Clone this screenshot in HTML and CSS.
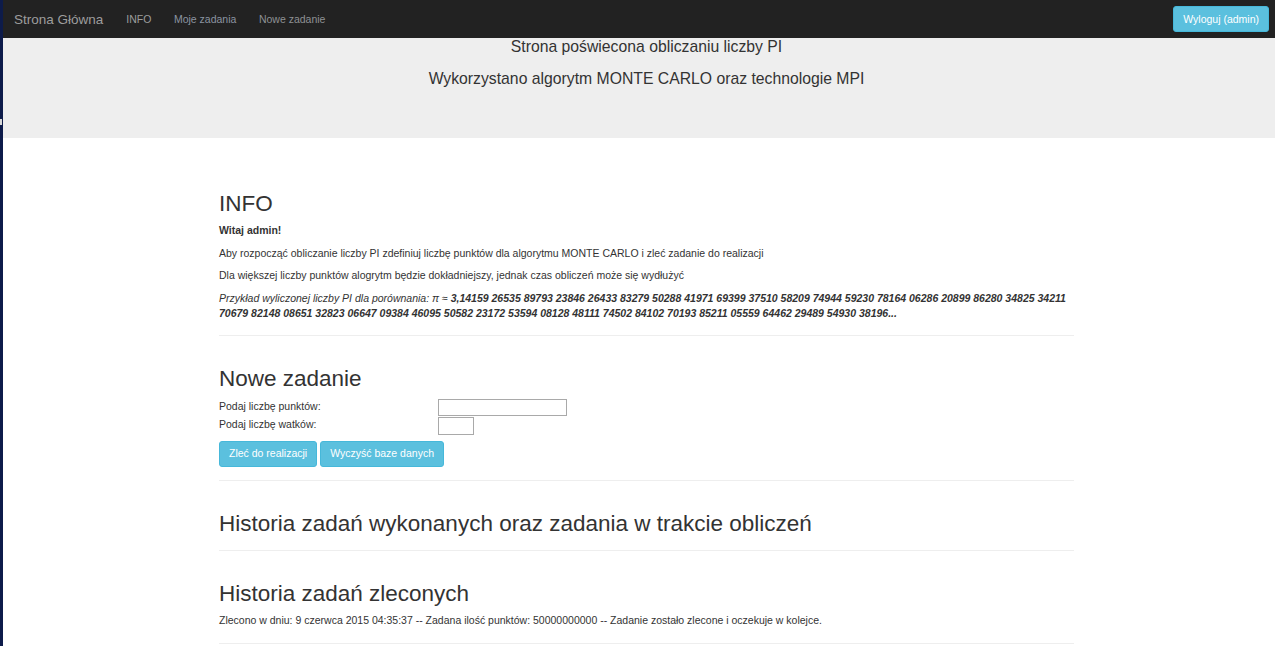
FILE: index.html
```html
<!DOCTYPE html>
<html lang="pl">
<head>
<meta charset="utf-8">
<title>Strona Główna</title>
<link rel="stylesheet" href="styles.css">
</head>
<body>
<div class="page">
  <div class="strip"><span class="strip-mark"></span></div>
  <div class="main">
    <nav class="navbar">
      <div class="nav-left">
        <a class="brand" href="#">Strona Główna</a>
        <a class="nav-link nav-info" href="#">INFO</a>
        <a class="nav-link nav-blue" href="#">Moje zadania</a>
        <a class="nav-link" href="#">Nowe zadanie</a>
      </div>
      <button class="btn btn-logout">Wyloguj (admin)</button>
    </nav>
    <div class="jumbotron">
      <div class="container">
        <p class="jt-line1">Strona poświecona obliczaniu liczby PI</p>
        <p class="jt-line2">Wykorzystano algorytm MONTE CARLO oraz technologie MPI</p>
      </div>
    </div>
    <div class="container content">
      <h2 class="h-info">INFO</h2>
      <p class="bold">Witaj admin!</p>
      <p>Aby rozpocząć obliczanie liczby PI zdefiniuj liczbę punktów dla algorytmu MONTE CARLO i zleć zadanie do realizacji</p>
      <p>Dla większej liczby punktów alogrytm będzie dokładniejszy, jednak czas obliczeń może się wydłużyć</p>
      <p class="pi"><i>Przykład wyliczonej liczby PI dla porównania: π ≈ <b>3,14159 26535 89793 23846 26433 83279 50288 41971 69399 37510 58209 74944 59230 78164 06286 20899 86280 34825 34211 70679 82148 08651 32823 06647 09384 46095 50582 23172 53594 08128 48111 74502 84102 70193 85211 05559 64462 29489 54930 38196...</b></i></p>
      <hr class="hr1">
      <h2 class="h-section">Nowe zadanie</h2>
      <div class="form-grid">
        <label class="lbl">Podaj liczbę punktów:</label>
        <div class="cell"><input class="in-points" type="text"></div>
        <label class="lbl">Podaj liczbę watków:</label>
        <div class="cell"><input class="in-threads" type="text"></div>
      </div>
      <div class="btn-row">
        <button class="btn btn-info">Zleć do realizacji</button>
        <button class="btn btn-info">Wyczyść baze danych</button>
      </div>
      <hr class="hr2">
      <h2 class="h-section">Historia zadań wykonanych oraz zadania w trakcie obliczeń</h2>
      <hr class="hr3">
      <h2 class="h-section">Historia zadań zleconych</h2>
      <p class="task">Zlecono w dniu: 9 czerwca 2015 04:35:37 -- Zadana ilość punktów: 50000000000 -- Zadanie zostało zlecone i oczekuje w kolejce.</p>
      <hr class="hr4">
    </div>
  </div>
</div>
</body>
</html>
```

FILE: styles.css
```css
* { box-sizing: border-box; }
html, body { margin: 0; padding: 0; }
body {
  font-family: "Liberation Sans", Arial, Helvetica, sans-serif;
  font-size: 10.5px;
  line-height: 15px;
  color: #333;
  background: #fff;
}
.page {
  display: flex;
  min-height: 646px;
}
.strip {
  width: 3px;
  flex: 0 0 3px;
  background: #0d1b4a;
  position: relative;
}
.strip-mark {
  position: absolute;
  left: 0;
  top: 119px;
  width: 2px;
  height: 6px;
  background: #d8d8d8;
}
.main {
  flex: 1;
  min-width: 0;
}
.navbar {
  height: 38px;
  background: #222;
  display: flex;
  align-items: center;
  justify-content: space-between;
  padding: 0 6px 0 11px;
}
.nav-left {
  display: flex;
  align-items: center;
}
.brand {
  font-size: 13.5px;
  color: #9d9d9d;
  text-decoration: none;
  margin-right: 23px;
}
.nav-link {
  color: #8e9194;
  text-decoration: none;
  font-size: 10.5px;
  margin-right: 22.5px;
}
.nav-info { color: #9d9d9d; }
.nav-blue { color: #8b94a1; }
.btn {
  font-family: inherit;
  font-size: 10.5px;
  line-height: 15px;
  padding: 4.5px 9px;
  border-radius: 3px;
  border: 1px solid #46b8da;
  background: #5bc0de;
  color: #fff;
  cursor: pointer;
}
.btn-logout {
  height: 26px;
  padding: 4px 9px;
}
.jumbotron {
  background: #eee;
  height: 100px;
  padding-top: 0;
}
.container {
  width: 855px;
  margin-left: 216px;
}
.jumbotron p {
  margin: 0;
  text-align: center;
  font-size: 15.75px;
  line-height: 18px;
}
.jt-line2 { margin-top: 14px !important; }
.content {
  padding-top: 52.5px;
}
h2 {
  font-weight: 500;
  font-size: 22.5px;
  line-height: 25px;
  margin: 0 0 7.5px;
  color: #333;
}
.content p {
  margin: 0 0 7.5px;
}
.bold { font-weight: bold; }
.pi { margin-bottom: 0 !important; }
hr {
  border: 0;
  border-top: 1px solid #eee;
  margin: 0;
  height: 0;
}
.hr1 { margin-top: 14.5px; }
.h-section { margin-top: 30px; }
.form-grid {
  display: grid;
  grid-template-columns: 219px auto;
  margin-top: 0;
}
.lbl {
  height: 18px;
  line-height: 15px;
}
.cell { height: 18px; }
input {
  display: block;
  border: 1px solid #a9a9a9;
  padding: 0;
  margin: 0;
  background: #fff;
  font-family: inherit;
  font-size: 10.5px;
}
.in-points { width: 129px; height: 17px; }
.in-threads { width: 36px; height: 18px; }
.btn-row {
  margin-top: 6px;
  display: flex;
  gap: 3px;
}
.btn-info { height: 26px; }
.hr2 { margin-top: 13px; }
.hr3 { margin-top: 14.5px; }
.content .task {
  font-size: 10.5px;
  margin: -1px 0 0;
}
.hr4 { margin-top: 15px; }
```
